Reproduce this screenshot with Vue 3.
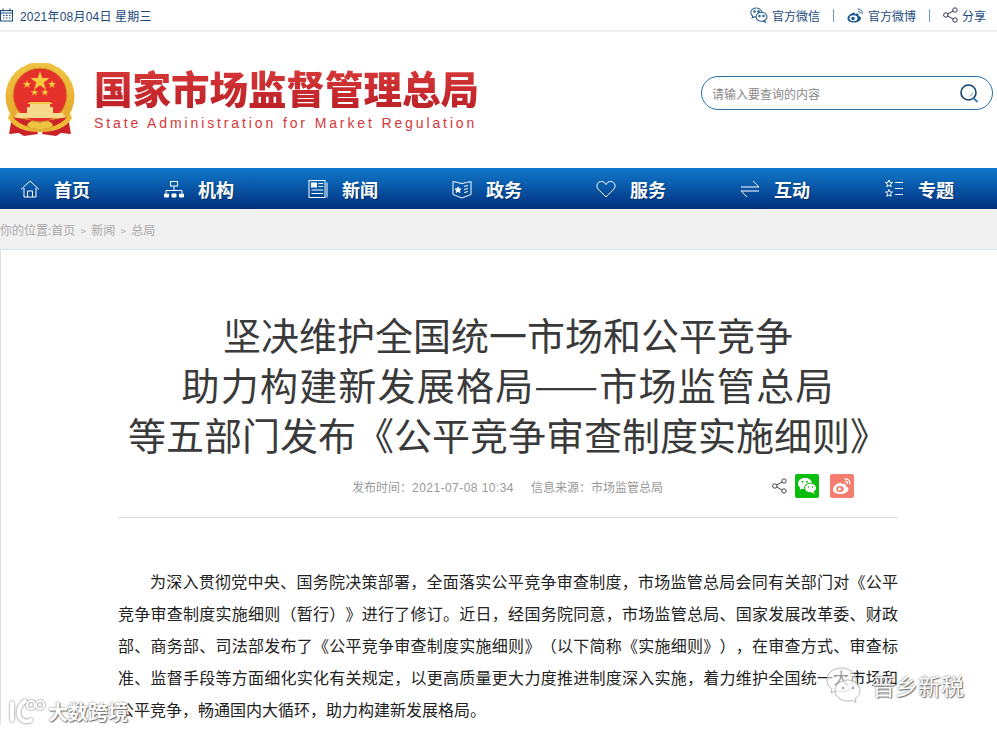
<template>
  <div class="page">
    <div class="topbar">
      <div class="date">
        <svg class="cal" width="13" height="14" viewBox="0 0 13 14" fill="none" stroke="#1c4a7c">
          <rect x="0.5" y="2.5" width="12" height="10.5" />
          <path d="M3 0.5v3M10 0.5v3M0.5 5h12" />
          <path d="M3 7.5h1.5M6 7.5h1.5M9 7.5h1.5M3 10h1.5M6 10h1.5M9 10h1.5" />
        </svg>
        <span>2021年08月04日 星期三</span>
      </div>
      <div class="links">
        <svg width="18" height="16" viewBox="0 0 18 16" fill="none" stroke="#2a5f8f" stroke-width="1.1">
          <path d="M6.5 1C3.2 1 .8 3 .8 5.6c0 1.5.8 2.7 2 3.6l-.5 1.6 1.9-1c.7.2 1.4.3 2.1.3" />
          <path d="M12.2 5C10.4 2.300 8 1 6.500 1" />
          <ellipse cx="11.500" cy="9.800" rx="5.500" ry="4.500" />
          <path d="M14.500 13.500l.8 1.800-2.200-1.200" />
          <circle cx="4.500" cy="4.500" r=".8" fill="#2a5f8f" />
          <circle cx="8.500" cy="4.500" r=".8" fill="#2a5f8f" />
          <circle cx="9.500" cy="9" r=".7" fill="#2a5f8f" />
          <circle cx="13.500" cy="9" r=".7" fill="#2a5f8f" />
        </svg>
        <span class="lk">官方微信</span>
        <i class="sep"></i>
        <svg width="17" height="15" viewBox="0 0 17 15">
          <path d="M7 4.500C3.500 5.500.5 8 .5 10.500c0 2.500 3 4 6.500 4 3.800 0 7-2 7-4.300 0-1.600-1.600-2-2.500-2.300.5-1.300.1-2.300-1.500-2.300-.8 0-1.700.3-2.200.6.300-1.300-.1-2-.8-1.700z" fill="#1c5688" />
          <ellipse cx="6.500" cy="10.300" rx="4" ry="3" fill="#fff" />
          <circle cx="6" cy="10.500" r="1.800" fill="#1c5688" />
          <path d="M10.500 1.200c2.800-.6 5.200 1.800 4.600 4.600M11 3.400c1.300-.3 2.400.8 2.100 2.100" stroke="#1c5688" fill="none" />
        </svg>
        <span class="lk">官方微博</span>
        <i class="sep"></i>
        <svg width="15" height="16" viewBox="0 0 15 16" fill="none" stroke="#335">
          <circle cx="2.800" cy="8" r="2.200" />
          <circle cx="12" cy="3" r="2.200" />
          <circle cx="12" cy="13" r="2.200" />
          <path d="M4.800 7l5.200-3M4.800 9l5.200 3" />
        </svg>
        <span class="lk">分享</span>
      </div>
    </div>

    <header class="header">
      <div class="brand">
        <svg class="emblem" width="70" height="75" viewBox="2 0 70 75">
          <defs>
            <linearGradient id="gold" x1="0" y1="0" x2="0" y2="1">
              <stop offset="0" stop-color="#f0c443" />
              <stop offset="1" stop-color="#e3a52a" />
            </linearGradient>
          </defs>
          <circle cx="37" cy="33.500" r="34.500" fill="url(#gold)" />
          <circle cx="37" cy="32" r="27" fill="#e4312b" stroke="#d99a26" />
          <g fill="#f4c93e">
            <path d="M37 8l2.300 7.100h7.400l-6 4.400 2.300 7.100-6-4.400-6 4.400 2.300-7.100-6-4.400h7.400z" />
            <path d="M24 17l1 3h3.200l-2.600 1.900 1 3-2.600-1.900-2.600 1.900 1-3-2.600-1.900h3.200z" />
            <path d="M49 17l1 3h3.200l-2.600 1.900 1 3-2.600-1.900-2.600 1.900 1-3-2.600-1.900h3.200z" />
            <path d="M31.500 25.500l.9 2.700h2.900l-2.300 1.700.9 2.700-2.400-1.700-2.400 1.700.9-2.700-2.300-1.700h2.900z" />
            <path d="M42 25.500l.9 2.700h2.900l-2.300 1.700.9 2.700-2.400-1.700-2.400 1.700.9-2.700-2.300-1.700h2.900z" />
          </g>
          <path d="M24 44h26v6H24zM27 41h20v3H27z" fill="#f6d98a" />
          <path d="M24 41h26l-3-2H27z" fill="#f3c94a" />
          <path d="M14 50h46l3 5H11z" fill="#f6d98a" />
          <path d="M9 54L6 71l10-1 5 3 14-2-3-13zM65 54l3 17-10-1-5 3-14-2 3-13z" fill="#cc2328" />
          <path d="M7 50c6 10 16 15 30 15s24-5 30-15l2 5c-6 10-17 14-32 14S11 65 5 55z" fill="#eeba36" />
          <path d="M24 62c3-5 7-5 13-2 6-3 10-3 13 2-3 4-5 4-7 3-2 3-10 3-12 0-2 1-4 1-7-3z" fill="#f0c443" stroke="#c8892a" stroke-width=".6" />
        </svg>
        <div class="brandtext">
          <div class="cn">国家市场监督管理总局</div>
          <div class="en">State Administration for Market Regulation</div>
        </div>
      </div>
      <div class="search">
        <span>请输入要查询的内容</span>
        <svg width="19" height="19" viewBox="0 0 19 19" fill="none" stroke="#12406e">
          <circle cx="8.500" cy="8.500" r="7.500" stroke-width="1.600" />
          <path d="M13.500 14l4 4" stroke="#3d7fb4" stroke-width="2" />
          <path d="M12.500 8.500a4 4 0 0 1-3 3.800" stroke="#6ea3cc" />
        </svg>
      </div>
    </header>

    <nav class="nav">
      <a v-for="item in navItems" :key="item.label" class="navitem">
        <svg width="20" height="20" viewBox="0 0 20 20" fill="none" stroke="#fff" stroke-width="1" v-html="item.icon"></svg>
        <span>{{ item.label }}</span>
      </a>
    </nav>

    <div class="crumb">你的位置:首页 <small>&gt;</small> 新闻 <small>&gt;</small> 总局</div>

    <main class="article">
      <h1>
        <span>坚决维护全国统一市场和公平竞争</span>
        <span class="wide">助力构建新发展格局——市场监管总局</span>
        <span>等五部门发布《公平竞争审查制度实施细则》</span>
      </h1>
      <div class="meta">
        <span class="time">发布时间：<b>2021-07-08 10:34</b></span>
        <span>信息来源：市场监管总局</span>
        <div class="shares">
          <svg width="15" height="16" viewBox="0 0 15 16" fill="none" stroke="#444">
            <circle cx="2.800" cy="8" r="2.200" />
            <circle cx="12" cy="3" r="2.200" />
            <circle cx="12" cy="13" r="2.200" />
            <path d="M4.800 7l5.200-3M4.800 9l5.200 3" />
          </svg>
          <span class="sq green">
            <svg width="20" height="18" viewBox="0 0 20 18" fill="#fff">
              <ellipse cx="8" cy="6.500" rx="7" ry="5.800" />
              <path d="M3.500 10l-.8 3 3-1.700z" />
              <ellipse cx="13.500" cy="11" rx="6" ry="4.800" fill="#fff" stroke="#0bbd0d" />
              <path d="M16.500 14.500l1 2.500-3-1.500z" />
              <circle cx="5.500" cy="4.800" r="1" fill="#0bbd0d" />
              <circle cx="10" cy="4.800" r="1" fill="#0bbd0d" />
              <circle cx="11.500" cy="10" r=".8" fill="#0bbd0d" />
              <circle cx="15.500" cy="10" r=".8" fill="#0bbd0d" />
            </svg>
          </span>
          <span class="sq red">
            <svg width="20" height="18" viewBox="0 0 20 18">
              <path d="M8.500 5.500C4.500 6.500 1 9.500 1 12.500 1 15.500 4.500 17 8.500 17c4.500 0 8-2.300 8-5 0-1.800-1.800-2.300-2.900-2.600.6-1.500.1-2.700-1.700-2.700-.9 0-2 .4-2.500.7.300-1.500-.1-2.300-1.900-1.900z" fill="#fff" />
              <ellipse cx="8" cy="12" rx="3.800" ry="3" fill="#f47d6f" />
              <circle cx="7.500" cy="12" r="1.500" fill="#fff" />
              <path d="M12.500 2c3.200-.7 6 2 5.300 5.300M13 4.500c1.500-.3 2.800 1 2.500 2.500" stroke="#fff" stroke-width="1.300" fill="none" />
            </svg>
          </span>
        </div>
      </div>
      <p class="body">
        为深入贯彻党中央、国务院决策部署，全面落实公平竞争审查制度，市场监管总局会同有关部门对《公平竞争审查制度实施细则（暂行）》进行了修订。近日，经国务院同意，市场监管总局、国家发展改革委、财政部、商务部、司法部发布了《公平竞争审查制度实施细则》（以下简称《实施细则》），在审查方式、审查标准、监督手段等方面细化实化有关规定，以更高质量更大力度推进制度深入实施，着力维护全国统一大市场和公平竞争，畅通国内大循环，助力构建新发展格局。
      </p>
    </main>

    <div class="mark left">
      <svg width="38" height="28" viewBox="0 0 38 28" fill="none" stroke="#fff" stroke-width="4">
        <path d="M3 5v17M16 3C9 8 8 17 12 21c3 3 7 3 10 1" stroke-linecap="round" />
        <circle cx="22" cy="7" r="4" stroke-width="2" />
        <circle cx="31" cy="7" r="4" stroke-width="2" />
      </svg>
      <span>大数跨境</span>
    </div>
    <div class="mark right">
      <svg width="38" height="36" viewBox="0 0 38 36" fill="rgba(255,255,255,.55)" stroke="#aaa" stroke-width=".8">
        <path d="M16 1C8 1 2 6 2 13c0 4 2 7 5 9l-1 4 5-2c2 .5 3 .7 5 .7 8 0 15-5 15-12S24 1 16 1z" />
        <path d="M23 13c-7 0-13 4.500-13 10.500S16 34 23 34c1.500 0 3-.2 4-.6l4 2-1-3.500c3-2 5-5 5-8.400C35 17.500 30 13 23 13z" />
        <circle cx="10" cy="9" r="1" fill="#888" />
        <circle cx="21" cy="9" r="1" fill="#888" />
        <circle cx="18" cy="21" r="1" fill="#888" />
        <circle cx="28" cy="21" r="1" fill="#888" />
      </svg>
      <span>晋乡新税</span>
    </div>
  </div>
</template>

<script setup>
const navItems = [
  {
    label: '首页',
    icon: '<path d="M1 10.500L10 2l9 8.500M4 9v9h12V9M7.500 18v-6h5v6"/>',
  },
  {
    label: '机构',
    icon: '<rect x="6.500" y="2.500" width="7" height="4.500"/><path d="M10 7v4M2 14v-2.500h16V14"/><path d="M0.500 15h4v3h-4zM8 15h4v3H8zM15.500 15h4v3h-4z" fill="#fff"/>',
  },
  {
    label: '新闻',
    icon: '<rect x="1" y="1.500" width="16" height="17"/><path d="M19 3.500v15"/><rect x="3.500" y="4" width="5" height="4" fill="#fff"/><path d="M10.500 4.500h4.500M10.500 7.500h4.500M3.500 11h11.500M3.500 14.500h11.500"/>',
  },
  {
    label: '政务',
    icon: '<path d="M1 2.500c3 1 6 1 9 2 3-1 6-1 9-2v13l-9 3.500-9-3.500z"/><path d="M6 8l.9 2h2l-1.500 1.400.5 2-1.900-1-1.900 1 .5-2L3.100 10h2z" fill="#fff"/><path d="M12 7.500l4-1M12 10.500l4-1M12 13.500l4-1"/>',
  },
  {
    label: '服务',
    icon: '<path d="M10 18L2 10C-.5 6.500 1.500 2.500 5.500 2.500c2 0 3.500 1 4.500 3 1-2 2.500-3 4.500-3 4 0 6 4 3.500 7.500z"/>',
  },
  {
    label: '互动',
    icon: '<path d="M1 8h18L13 2M19 12H1l6 6"/>',
  },
  {
    label: '专题',
    icon: '<path d="M5 1l1.100 2.500h2.400l-2 1.700.7 2.600L5 6.400 2.800 7.800l.7-2.600-2-1.700h2.400zM5 10.500l1.100 2.500h2.400l-2 1.700.7 2.600L5 15.900l-2.200 1.400.7-2.600-2-1.700h2.400z"/><path d="M11 3.500h8M11 9.500h8M11 15.500h8"/>',
  },
];
</script>

<style>
html,
body {
  margin: 0;
  background: #fff;
  overflow: hidden;
}
</style>

<style scoped>
.page {
  position: relative;
  height: 729px;
  overflow: hidden;
  background: #fff;
  font-family: 'Noto Sans CJK SC', 'Liberation Sans', sans-serif;
  text-spacing-trim: space-all;
}

.topbar {
  height: 30px;
  border-bottom: 2px solid #eeeeee;
  display: flex;
  justify-content: space-between;
  align-items: center;
  font-size: 12px;
  color: #1c4a7c;
}

.date {
  display: flex;
  align-items: center;
  gap: 7px;
  letter-spacing: 0.2px;
  font-family: 'Liberation Sans', 'Noto Sans CJK SC', sans-serif;
}

.links {
  display: flex;
  align-items: center;
  padding-right: 11px;
}

.lk {
  margin-left: 4px;
}

.sep {
  width: 1px;
  height: 13px;
  background: #6f9fbe;
  margin: 0 13px;
}

.header {
  height: 136px;
  display: flex;
  align-items: center;
  justify-content: space-between;
  padding: 0 4px 0 5px;
}

.brand {
  display: flex;
  align-items: center;
  gap: 19px;
}

.cn {
  font-size: 38.500px;
  line-height: 42px;
  margin-top: -2px;
  font-weight: 900;
  white-space: nowrap;
  background: linear-gradient(#d8393a, #bd2227);
  -webkit-background-clip: text;
  background-clip: text;
  color: transparent;
}

.en {
  font-family: 'Liberation Sans', sans-serif;
  font-size: 14px;
  line-height: 20px;
  margin-top: 5px;
  letter-spacing: 2.880px;
  color: #d2383a;
  white-space: nowrap;
}

.search {
  box-sizing: content-box;
  width: 267px;
  height: 32px;
  margin-bottom: 14px;
  border: 1px solid #2a70a8;
  border-radius: 17px;
  display: flex;
  align-items: center;
  justify-content: space-between;
  padding: 0 13px 0 10px;
  font-size: 12px;
  color: #888;
}

.nav {
  height: 41px;
  background: linear-gradient(#1079cb, #00307e);
  display: flex;
  padding-left: 20px;
}

.navitem {
  flex: none;
  width: 144px;
  display: flex;
  align-items: center;
  gap: 14px;
  color: #fff;
  font-size: 18px;
  font-weight: 700;
  text-shadow: 1px 1px 1px rgba(0, 0, 0, 0.25);
}

.crumb {
  height: 40px;
  line-height: 42px;
  background: #f1f1f1;
  color: #aaa;
  font-size: 12px;
}

.crumb small {
  font-size: 10px;
  margin: 0 2.500px;
}

.article {
  border-top: 1px solid #d9e1ec;
  border-left: 1px solid #d9e1ec;
  margin: 0;
  padding: 59px 99px 0 117px;
}

h1 {
  margin: 0;
  font-size: 38px;
  line-height: 50px;
  font-weight: 400;
  color: #3a3a3a;
  text-align: center;
  white-space: nowrap;
}

h1 span {
  display: block;
}

h1 .wide {
  letter-spacing: 1.200px;
}

.meta {
  box-sizing: border-box;
  display: flex;
  align-items: center;
  height: 59px;
  padding-left: 234px;
  padding-bottom: 3px;
  border-bottom: 1px solid #dddddd;
  font-size: 12px;
  color: #999;
}

.time {
  margin-right: 17px;
}

.time b {
  font-family: 'Liberation Sans', sans-serif;
  font-weight: 400;
  letter-spacing: 0.45px;
}

.shares {
  margin-left: auto;
  margin-right: 44px;
  margin-top: -2px;
  display: flex;
  align-items: center;
}

.sq {
  width: 24px;
  height: 24px;
  border-radius: 2px;
  display: flex;
  align-items: center;
  justify-content: center;
}

.green {
  background: #0bbd0d;
  margin-left: 8px;
}

.red {
  background: #f47d6f;
  margin-left: 11px;
}

.body {
  margin: 47px 0 0;
  font-size: 16px;
  line-height: 32px;
  color: #222;
  text-indent: 2em;
  text-align: justify;
}

.mark {
  position: absolute;
  display: flex;
  align-items: center;
  color: #fff;
  text-shadow: 0 0 2px #666, 1px 1px 1px #777;
}

.mark.left {
  left: 9px;
  top: 697px;
  gap: 1px;
  font-size: 20px;
  font-weight: 700;
}

.mark.left svg {
  filter: drop-shadow(0 0 1px #666);
}

.mark.right {
  left: 825px;
  top: 667px;
  gap: 9px;
  font-size: 23px;
}
</style>
